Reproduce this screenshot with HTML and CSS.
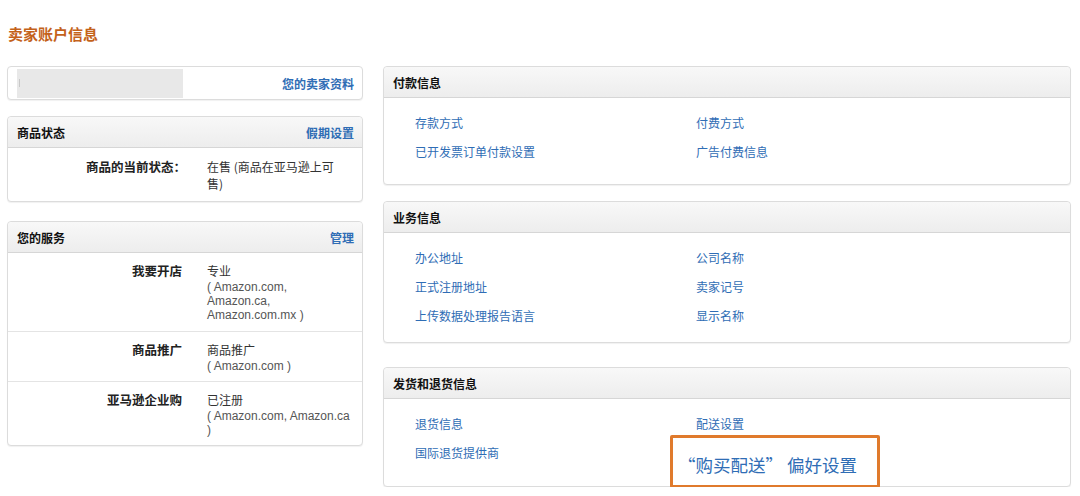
FILE: index.html
```html
<!DOCTYPE html>
<html lang="zh">
<head>
<meta charset="utf-8">
<link rel="stylesheet" href="styles.css">
</head>
<body>
<div class="page">
  <h1 class="title">卖家账户信息</h1>
  <div class="layout">
    <div class="col-left">
      <div class="box box-profile">
        <div class="placeholder"><span class="tick"></span></div>
        <a class="link link-strong" href="#">您的卖家资料</a>
      </div>

      <div class="box box-status">
        <div class="box-head"><span class="head-title">商品状态</span><a class="link link-strong" href="#">假期设置</a></div>
        <div class="kv-row kv-status">
          <div class="kv-label">商品的当前状态：</div>
          <div class="kv-value">在售 (商品在亚马逊上可售)</div>
        </div>
      </div>

      <div class="box box-services">
        <div class="box-head"><span class="head-title">您的服务</span><a class="link link-strong" href="#">管理</a></div>
        <div class="kv-row kv-r1">
          <div class="kv-label">我要开店</div>
          <div class="kv-value"><span class="main">专业</span><span class="sub">( Amazon.com,</span><span class="sub">Amazon.ca,</span><span class="sub">Amazon.com.mx )</span></div>
        </div>
        <div class="kv-row kv-r2">
          <div class="kv-label">商品推广</div>
          <div class="kv-value"><span class="main">商品推广</span><span class="sub">( Amazon.com )</span></div>
        </div>
        <div class="kv-row kv-r3">
          <div class="kv-label">亚马逊企业购</div>
          <div class="kv-value"><span class="main">已注册</span><span class="sub">( Amazon.com, Amazon.ca</span><span class="sub">)</span></div>
        </div>
      </div>
    </div>

    <div class="col-right">
      <div class="box box-pay">
        <div class="box-head"><span class="head-title">付款信息</span></div>
        <div class="links">
          <a class="link" href="#">存款方式</a>
          <a class="link" href="#">付费方式</a>
          <a class="link" href="#">已开发票订单付款设置</a>
          <a class="link" href="#">广告付费信息</a>
        </div>
      </div>

      <div class="box box-biz">
        <div class="box-head"><span class="head-title">业务信息</span></div>
        <div class="links">
          <a class="link" href="#">办公地址</a>
          <a class="link" href="#">公司名称</a>
          <a class="link" href="#">正式注册地址</a>
          <a class="link" href="#">卖家记号</a>
          <a class="link" href="#">上传数据处理报告语言</a>
          <a class="link" href="#">显示名称</a>
        </div>
      </div>

      <div class="box box-ship">
        <div class="box-head"><span class="head-title">发货和退货信息</span></div>
        <div class="links">
          <a class="link" href="#">退货信息</a>
          <a class="link" href="#">配送设置</a>
          <a class="link" href="#">国际退货提供商</a>
          <span class="cell-hl"><a class="link link-big" href="#">“购买配送” 偏好设置</a></span>
        </div>
      </div>
    </div>
  </div>
</div>
</body>
</html>
```
FILE: styles.css
```css
* { box-sizing: border-box; }
html, body { margin: 0; padding: 0; background: #fff; }
body {
  font-family: "Noto Sans CJK SC", "Noto Sans", sans-serif;
  font-size: 12px;
  line-height: 17px;
  color: #333;
}
a { text-decoration: none; }
.link { color: #2f6db5; }
.link-strong { font-weight: bold; }

.page { padding: 23px 9px 0 7px; }
.title {
  margin: 0 0 21px 1px;
  font-size: 15px;
  line-height: 22px;
  font-weight: bold;
  color: #c4621a;
}
.layout {
  display: grid;
  grid-template-columns: 356px 1fr;
  column-gap: 20px;
  align-items: start;
}
.box {
  border: 1px solid #dcdcdc;
  border-radius: 4px;
  box-shadow: 0 1px 1px rgba(0,0,0,0.06);
  background: #fff;
}
.box-head {
  display: flex;
  justify-content: space-between;
  align-items: center;
  height: 31px;
  padding: 0 8px 0 9px;
  background: linear-gradient(#f8f8f8, #ededed);
  border-bottom: 1px solid #d6d6d6;
  border-radius: 4px 4px 0 0;
}
.head-title { font-weight: bold; color: #111; }

/* left column */
.col-left { display: flex; flex-direction: column; }
.box-profile {
  display: flex;
  justify-content: space-between;
  align-items: center;
  height: 34px;
  padding: 1px 8px 1px 9px;
}
.placeholder {
  width: 166px;
  height: 29px;
  background: #e8e8e8;
  position: relative;
}
.tick {
  position: absolute;
  left: 2px; top: 10px;
  width: 1px; height: 8px;
  background: #c8c8c8;
}
.box-status { margin-top: 16px; }
.box-services { margin-top: 19px; }

.kv-row {
  display: grid;
  grid-template-columns: 174px 146px;
  column-gap: 25px;
  padding: 9px 0 0;
  border-top: 1px solid #e4e4e4;
}
.box-head + .kv-row { border-top: none; }
.kv-label {
  text-align: right;
  font-weight: bold;
  font-size: 12.5px;
  line-height: 18px;
  color: #222;
}
.kv-value { color: #333; }
.kv-status { height: 53px; padding: 10px 0 0; }
.kv-status .kv-label { line-height: 17px; margin-right: -4px; }
.kv-status .kv-value { padding-right: 4px; }
.main { display: block; line-height: 18px; }
.sub {
  display: block;
  font-family: "Liberation Sans", Arial, sans-serif;
  font-size: 12px;
  line-height: 14px;
  color: #555;
  white-space: nowrap;
}
.kv-r1 { height: 78px; }
.kv-r2 { height: 50px; }
.kv-r3 { height: 64px; }

/* right column */
.col-right { display: flex; flex-direction: column; }
.box-biz { margin-top: 16px; }
.box-ship { margin-top: 24px; }
.links {
  display: grid;
  grid-template-columns: 281px 1fr;
  grid-auto-rows: 29px;
  padding: 10px 0 0 31px;
}
.box-pay .links { height: 86px; }
.box-biz .links { height: 109px; }
.box-ship .links { height: 87px; }
.links .link { line-height: 29px; }
.cell-hl { position: relative; }
.link.link-big {
  position: absolute;
  left: -26px;
  top: -3px;
  width: 210px;
  height: 53px;
  border: 3px solid #e07a2c;
  border-radius: 2px;
  padding: 12px 0 0 5px;
  font-size: 17.5px;
  line-height: 30px;
  color: #2f6db5;
  background: #fff;
  white-space: nowrap;
  z-index: 2;
}
```
